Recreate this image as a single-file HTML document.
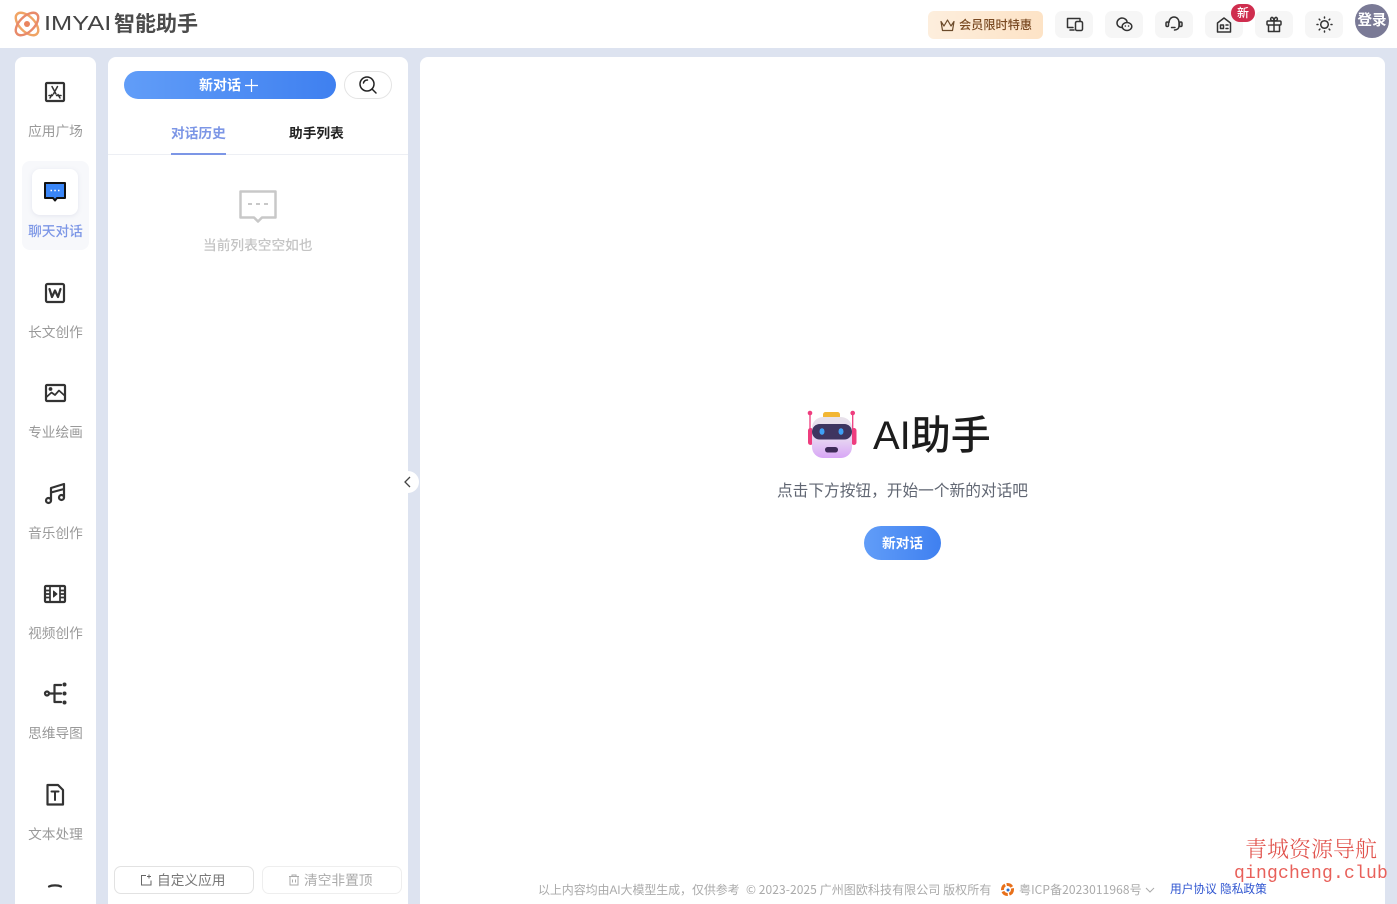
<!DOCTYPE html>
<html lang="zh"><head><meta charset="utf-8"><title>AI助手</title>
<style>
*{box-sizing:border-box;margin:0;padding:0}
html{width:1397px;height:904px;overflow:hidden;background:#dde3f0}
body{width:1397px;height:904px;overflow:hidden;background:#dde3f0;position:relative;font-family:"Liberation Sans","Noto Sans CJK SC",sans-serif;filter:blur(.3px)}
.a{position:absolute}
.t{position:absolute;white-space:nowrap;line-height:1}
.panel{position:absolute;background:#fff;border-radius:8px 8px 0 0;top:57px;height:847px}
.nb{position:absolute;left:15px;width:81px;text-align:center;font-size:13.7px;color:#999;line-height:1}
svg{position:absolute;overflow:visible}
.hb{position:absolute;top:11px;width:38px;height:27px;background:#f6f6f6;border-radius:7px}
.ic{fill:none;stroke:#333;stroke-width:2.2;stroke-linecap:round;stroke-linejoin:round}
.hi{fill:none;stroke:#333;stroke-width:1.5;stroke-linecap:round;stroke-linejoin:round}
.f{font-family:"Noto Sans CJK SC",sans-serif}
</style></head><body>
<div class="a" style="left:0;top:0;width:1397px;height:48px;background:#fff"></div>

<!-- logo -->
<svg style="left:13px;top:10px" width="28" height="28" viewBox="0 0 28 28" fill="none" stroke="#ec9a5c" stroke-width="2.4">
<ellipse cx="14" cy="14" rx="14" ry="7.5" transform="rotate(45 14 14)" stroke="#f0a465"/>
<ellipse cx="14" cy="14" rx="14" ry="7.5" transform="rotate(-45 14 14)" stroke="#e88a6a"/>
<circle cx="14" cy="14" r="3" fill="#e9855f" stroke="none"/>
</svg>
<div class="t" style="left:44px;top:14px;font-size:20px;font-weight:400;color:#444;transform:scaleX(1.27);transform-origin:left top;font-family:'Liberation Sans',sans-serif">IMYAI</div>
<div class="t" style="left:114px;top:14px;font-size:21px;font-weight:700;color:#4c4c4c">智能助手</div>

<!-- header right -->
<div class="a" style="left:928px;top:11px;width:115px;height:28px;border-radius:6px;background:linear-gradient(90deg,#fdeedd,#fde3c6)"></div>
<svg style="left:940px;top:19px" width="15" height="13" viewBox="0 0 15 13" fill="none" stroke="#6b4a2a" stroke-width="1.2" stroke-linejoin="round"><path d="M1 2.500L4 7 7.500 1 11 7 14 2.500 12.500 11.500H2.500Z"/></svg>
<div class="t" style="left:959px;top:19px;font-size:12.200px;color:#7a4a22;font-weight:500">会员限时特惠</div>

<div class="hb" style="left:1055px"></div>
<svg class="hi" style="left:1066px;top:17px" width="18" height="15" viewBox="0 0 18 15"><path d="M7 10.500H1.500V1.500H14V4M4 13H8"/><rect x="9.500" y="4.500" width="7" height="9" rx="1.500"/></svg>
<div class="hb" style="left:1105px"></div>
<svg class="hi" style="left:1116px;top:17px" width="17" height="15" viewBox="0 0 17 15" stroke-width="1.300"><path d="M6 10.500C3 10.500 1 8.500 1 6S3.300 1 6 1 11 3 11 5"/><ellipse cx="11" cy="9.500" rx="4.800" ry="4"/><path d="M9.300 9h.1M12.500 9h.1"/></svg>
<div class="hb" style="left:1155px"></div>
<svg class="hi" style="left:1165px;top:16px" width="18" height="17" viewBox="0 0 18 17"><path d="M4 6.500C4 3.500 6 1 9 1S14 3.500 14 6.500V10C14 12.500 12 14 9.500 14M6.500 11.500H10"/><rect x="1" y="6" width="2.500" height="4.500" rx="1.200"/><rect x="14.500" y="6" width="2.500" height="4.500" rx="1.200"/></svg>
<div class="hb" style="left:1205px"></div>
<svg class="hi" style="left:1216px;top:17px" width="16" height="16" viewBox="0 0 16 16" stroke-width="1.700"><path d="M1.500 6L8 1 14.500 6V15H1.500Z"/><path d="M4.500 8H7.500V11.500H4.500ZM10 8H12M10 11.500H12"/></svg>
<div class="a" style="left:1231px;top:4px;width:24px;height:18px;border-radius:9px;background:#cf2d4e;color:#fff;font-size:12px;line-height:18px;text-align:center;font-weight:500">新</div>
<div class="hb" style="left:1255px"></div>
<svg class="hi" style="left:1266px;top:16px" width="16" height="17" viewBox="0 0 16 17"><rect x="1" y="5" width="14" height="4" rx="1"/><path d="M2.500 9V15.500H13.500V9M8 5V15.500M8 5C5 5 4 3.500 5 2S8 2 8 5C8 2 10 .5 11 2S11 5 8 5"/></svg>
<div class="hb" style="left:1305px"></div>
<svg class="hi" style="left:1316px;top:16px" width="17" height="17" viewBox="0 0 17 17" stroke-width="1.200"><circle cx="8.500" cy="8.500" r="3.800"/><path d="M8.500 1v1M8.500 15v1M1 8.500h1M15 8.500h1M3.200 3.200l.7.7M13.100 13.100l.7.7M3.200 13.800l.7-.7M13.100 3.900l.7-.7"/></svg>
<div class="a" style="left:1355px;top:4px;width:34px;height:34px;border-radius:50%;background:#7a7a96;color:#fff;font-size:14.500px;line-height:34px;text-align:center;font-weight:700">登录</div>

<!-- sidebar -->
<div class="panel" style="left:15px;width:81px"></div>
<div class="a" style="left:22px;top:161px;width:67px;height:89px;background:#f7f8fb;border-radius:8px"></div>
<div class="a" style="left:32px;top:169px;width:46px;height:46px;background:#fff;border-radius:8px;box-shadow:0 1px 5px rgba(120,130,170,.15)"></div>

<svg class="ic" style="left:45px;top:82px" width="20" height="20" viewBox="0 0 20 20"><rect x="1" y="1" width="18" height="18" rx="1"/><path d="M7 4.500L11 12M12.500 4.500L8.500 12M4 13.500H7.500M11.500 13.500H16M5 16L7 12.500M15 16L13 12.500" stroke-width="1.500"/></svg>
<div class="nb" style="top:125px">应用广场</div>

<svg style="left:44px;top:182px" width="22" height="20" viewBox="0 0 22 20"><path d="M1 1H21V16H13L11 18.500 9 16H1Z" fill="#3a86f7" stroke="#111" stroke-width="2" stroke-linejoin="round"/><path d="M6.500 8.500h1.500M10.300 8.500h1.500M14 8.500h1.500" stroke="#fff" stroke-width="1.400"/></svg>
<div class="nb" style="top:225px;color:#7c96e6;font-weight:500">聊天对话</div>

<svg class="ic" style="left:45px;top:283px" width="20" height="20" viewBox="0 0 20 20"><rect x="1" y="1" width="18" height="18" rx="1.500"/><path d="M4.500 6L7 14 10 7.500 13 14 15.500 6"/></svg>
<div class="nb" style="top:326px">长文创作</div>

<svg class="ic" style="left:45px;top:384px" width="20" height="18" viewBox="0 0 20 18"><rect x="1" y="1" width="19" height="16" rx="1"/><path d="M1.500 13L6.500 8.500 10 11 14 6.500 19.500 11.500" stroke-width="1.700"/><circle cx="5.500" cy="5" r=".8" fill="#333"/></svg>
<div class="nb" style="top:426px">专业绘画</div>

<svg class="ic" style="left:45px;top:483px" width="20" height="21" viewBox="0 0 20 21"><circle cx="3.500" cy="17.500" r="2.500"/><circle cx="16.500" cy="14.500" r="2.500"/><path d="M6 17.500V5L19 1V14.500M6 9.500L19 6"/></svg>
<div class="nb" style="top:527px">音乐创作</div>

<svg class="ic" style="left:44px;top:585px" width="22" height="18" viewBox="0 0 22 18"><rect x="1" y="1" width="20" height="16" rx="1"/><path d="M6 1V17M16 1V17M1 5.500H6M1 9H6M1 12.500H6M16 5.500H21M16 9H21M16 12.500H21" stroke-width="1.700"/><path d="M9.500 6L13 9 9.500 12Z" fill="#333" stroke-width="1"/></svg>
<div class="nb" style="top:627px">视频创作</div>

<svg class="ic" style="left:44px;top:682px" width="23" height="23" viewBox="0 0 23 23"><circle cx="3" cy="11.500" r="2"/><path d="M5 11.500H17M17 3H10.500V20H17"/><circle cx="20.500" cy="2.500" r="2" fill="#333" stroke="none"/><circle cx="20.500" cy="11.500" r="2" fill="#333" stroke="none"/><circle cx="20.500" cy="20.500" r="2" fill="#333" stroke="none"/></svg>
<div class="nb" style="top:727px">思维导图</div>

<svg class="ic" style="left:46px;top:784px" width="18" height="22" viewBox="0 0 18 22"><path d="M1.500 1H12L17 6V20.500H1.500Z"/><path d="M5.500 7.500H12.500M9 7.500V16" stroke-width="2"/></svg>
<div class="nb" style="top:828px">文本处理</div>

<svg class="ic" style="left:48px;top:884px" width="14" height="4" viewBox="0 0 14 4"><path d="M1 2.500C4 1 10 1 13 2.500"/></svg>

<!-- middle panel -->
<div class="panel" style="left:108px;width:300px"></div>
<div class="a" style="left:124px;top:71px;width:212px;height:28px;border-radius:14px;background:linear-gradient(90deg,#619df8,#3f80f0)"></div>
<div class="t" style="left:199px;top:78px;font-size:14px;color:#fff;font-weight:700">新对话</div>
<svg style="left:245px;top:79px" width="13" height="13" viewBox="0 0 13 13" fill="none" stroke="#fff" stroke-width="1.200"><path d="M6.500 0V13M0 6.500H13"/></svg>
<div class="a" style="left:344px;top:71px;width:48px;height:28px;border-radius:14px;border:1px solid #e4e4e4;background:#fff"></div>
<svg style="left:359px;top:76px" width="18" height="18" viewBox="0 0 18 18" fill="none" stroke="#222" stroke-width="1.500" stroke-linecap="round"><circle cx="8" cy="8" r="7"/><path d="M13 13L17 17M4.500 7C5 5 6.500 4 8.500 4"/></svg>

<div class="t" style="left:171px;top:127px;font-size:13.700px;color:#7c96e6;font-weight:700">对话历史</div>
<div class="t" style="left:289px;top:127px;font-size:13.700px;color:#222;font-weight:700">助手列表</div>
<div class="a" style="left:108px;top:154px;width:300px;height:1px;background:#edeff4"></div>
<div class="a" style="left:171px;top:153px;width:55px;height:2px;background:#7c96e6"></div>

<svg style="left:239px;top:190px" width="38" height="33" viewBox="0 0 38 33"><path d="M1.500 1.500H36.500V27.500H23L19 31.500 15 27.500H1.500Z" fill="#fff" stroke="#c8c8c8" stroke-width="2.500" stroke-linejoin="round"/><path d="M9 14h4M17 14h4M25 14h4" stroke="#c8c8c8" stroke-width="2"/></svg>
<div class="t" style="left:203px;top:239px;font-size:13.700px;color:#c4c4c4;font-weight:500">当前列表空空如也</div>

<div class="a" style="left:114px;top:866px;width:140px;height:28px;border:1px solid #e2e2e2;border-radius:7px"></div>
<svg style="left:140px;top:874px" width="12" height="12" viewBox="0 0 12 12" fill="none" stroke="#666" stroke-width="1"><path d="M6 1.500H1.500V11H11V6.500M9 .5V4.500M7 2.500H11"/></svg>
<div class="t" style="left:157px;top:874px;font-size:13.700px;color:#777">自定义应用</div>
<div class="a" style="left:262px;top:866px;width:140px;height:28px;border:1px solid #eee;border-radius:7px"></div>
<svg style="left:288px;top:874px" width="12" height="12" viewBox="0 0 12 12" fill="none" stroke="#aaa" stroke-width="1"><path d="M1 2.500H11M4 2.500V1H8V2.500M2 2.500V11H10V2.500M4.500 5.500V8.500M7.500 5.500V8.500"/></svg>
<div class="t" style="left:304px;top:874px;font-size:13.700px;color:#aaa">清空非置顶</div>

<!-- main -->
<div class="panel" style="left:420px;width:965px"></div>
<div class="a" style="left:397px;top:471px;width:22px;height:22px;border-radius:50%;background:#fff"></div>
<svg style="left:403px;top:476px" width="9" height="12" viewBox="0 0 9 12" fill="none" stroke="#444" stroke-width="1.300"><path d="M7 1L2 6 7 11"/></svg>

<!-- robot -->
<svg style="left:806px;top:409px" width="51" height="51" viewBox="0 0 51 51">
<defs><linearGradient id="r" x1="0" y1="0" x2="0" y2="1"><stop offset="0" stop-color="#e8e2ea"/><stop offset=".55" stop-color="#e6d4f2"/><stop offset="1" stop-color="#d8a6f6"/></linearGradient></defs>
<path d="M4 4V28M46.700 4V28" stroke="#ee3d7e" stroke-width="1.300"/>
<circle cx="4" cy="4" r="2.300" fill="#ee3d7e"/><circle cx="46.700" cy="4" r="2.300" fill="#ee3d7e"/>
<rect x="2" y="19" width="5" height="17" rx="2.500" fill="#ee3d7e"/><rect x="45.500" y="19" width="5" height="17" rx="2.500" fill="#ee3d7e"/>
<rect x="17" y="3" width="17" height="7" rx="2.500" fill="#f2b634"/>
<rect x="6" y="8" width="40" height="41" rx="11" fill="url(#r)"/>
<rect x="6" y="15" width="40" height="15.500" rx="7.700" fill="#3e3560"/>
<ellipse cx="16" cy="22.500" rx="2.500" ry="3.300" fill="#3ea0f6"/><ellipse cx="35" cy="22.500" rx="2.500" ry="3.300" fill="#3ea0f6"/>
<rect x="19" y="38" width="13" height="5.500" rx="2.700" fill="#3e2a58"/>
</svg>
<div class="t" style="left:873px;top:416px;font-size:40px;color:#1c1c1c;font-weight:500">AI助手</div>
<div class="t" style="left:777px;top:484px;font-size:15.700px;color:#606672">点击下方按钮，开始一个新的对话吧</div>
<div class="a" style="left:864px;top:526px;width:77px;height:34px;border-radius:17px;background:linear-gradient(90deg,#619df8,#3f80f0);color:#fff;font-size:13.700px;line-height:35px;text-align:center;font-weight:700">新对话</div>

<!-- footer -->
<div class="t" style="left:538px;top:884px;font-size:12px;color:#aaa;letter-spacing:-.1px">以上内容均由AI大模型生成，仅供参考</div>
<div class="t f" style="left:746px;top:884px;font-size:12px;color:#aaa;letter-spacing:.07px">© 2023-2025 广州图欧科技有限公司 版权所有</div>
<svg style="left:1000px;top:882px" width="15" height="15" viewBox="0 0 15 15" fill="none"><circle cx="7.500" cy="7.500" r="5" stroke="#e8701a" stroke-width="3" stroke-dasharray="6 1.500"/><circle cx="8" cy="8" r="1.500" fill="#2a6fd0"/></svg>
<div class="t f" style="left:1019px;top:884px;font-size:12px;color:#aaa;letter-spacing:.08px">粤ICP备2023011968号</div>
<svg style="left:1145px;top:887px" width="10" height="6" viewBox="0 0 10 6" fill="none" stroke="#aaa"><path d="M1 1L5 5 9 1"/></svg>
<div class="t" style="left:1170px;top:884px;font-size:11.700px;color:#2f55d0">用户协议</div>
<div class="t" style="left:1220px;top:884px;font-size:11.700px;color:#2f55d0">隐私政策</div>

<div class="t" style="left:1245px;top:838px;font-size:22px;color:#e0504a;font-family:'Noto Serif CJK SC',serif;font-weight:300">青城资源导航</div>
<div class="t" style="left:1234px;top:865px;font-size:18px;color:#e8605a;font-family:'Liberation Mono',monospace;letter-spacing:.2px">qingcheng.club</div>
</body></html>
